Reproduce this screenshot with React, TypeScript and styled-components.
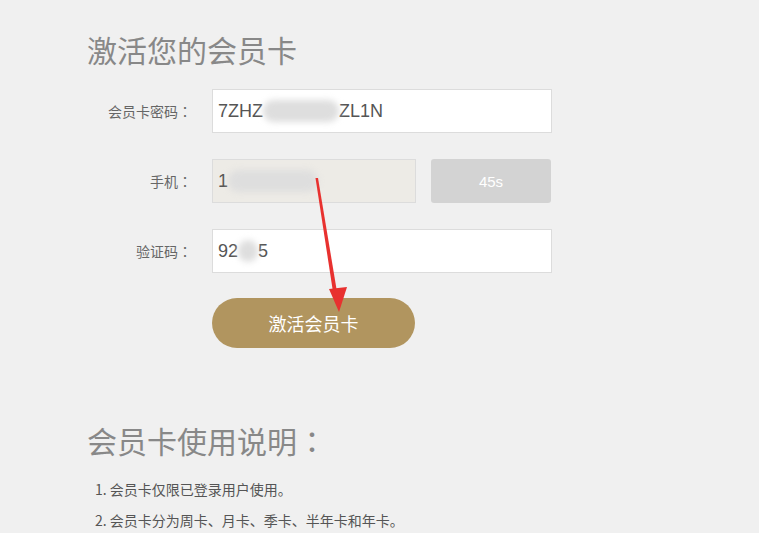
import React from 'react';
import styled, { createGlobalStyle } from 'styled-components';

const GlobalStyle = createGlobalStyle`
  html, body {
    margin: 0;
    padding: 0;
    background: #f0f0f0;
  }
  body {
    font-family: "Liberation Sans", Arial, "Noto Sans CJK SC", sans-serif;
  }
`;

const StyledPage = styled.div`
  position: relative;
  width: 759px;
  height: 533px;
  overflow: hidden;
  padding: 26px 0 0 87px;
  box-sizing: border-box;
  background: #f0f0f0;
`;

const Heading = styled.h2<{ $top?: number }>`
  margin: ${(p) => p.$top ?? 0}px 0 0;
  font-size: 30px;
  line-height: 46px;
  font-weight: normal;
  color: #888;
  font-family: "Noto Sans CJK SC", sans-serif;
`;

// centred full-width colon, as in the original page font
const Colon = styled.span`
  font-family: "Noto Sans CJK TC", sans-serif;
`;

const Form = styled.div`
  margin-top: 17px;
  display: grid;
  grid-template-columns: 105px 340px;
  column-gap: 20px;
  row-gap: 26px;
  align-items: center;
`;

const Label = styled.label`
  text-align: right;
  font-size: 14px;
  color: #666;
  font-family: "Noto Sans CJK SC", sans-serif;
`;

const Field = styled.div<{ $disabled?: boolean }>`
  height: 44px;
  box-sizing: border-box;
  border: 1px solid #dcdcdc;
  background: ${(p) => (p.$disabled ? '#edebe6' : '#fff')};
  padding-left: 5px;
  display: flex;
  align-items: center;
  font-size: 18px;
  color: #555;
  font-family: "Liberation Sans", Arial, sans-serif;
  white-space: nowrap;
  overflow: hidden;
`;

const Blur = styled.span<{ $w: number }>`
  display: inline-block;
  width: ${(p) => p.$w}px;
  height: 22px;
  border-radius: 11px;
  background: #dedede;
  filter: blur(3px);
`;

const PhoneRow = styled.div`
  display: grid;
  grid-template-columns: 204px 120px;
  column-gap: 15px;
`;

const CodeButton = styled.button`
  height: 44px;
  border: none;
  border-radius: 3px;
  background: #d3d3d3;
  color: #fff;
  font-size: 15px;
  font-family: "Liberation Sans", Arial, sans-serif;
`;

const SubmitButton = styled.button`
  grid-column: 2;
  margin-top: -1px;
  width: 203px;
  height: 50px;
  border: none;
  border-radius: 25px;
  background: #b1955f;
  color: #fff;
  font-size: 18px;
  font-family: "Noto Sans CJK SC", sans-serif;
`;

const Notes = styled.ol`
  list-style: none;
  margin: 11px 0 0;
  padding: 0 0 0 8px;
`;

const Note = styled.li`
  font-size: 14px;
  line-height: 31px;
  color: #555;
  font-family: "Noto Sans CJK SC", sans-serif;
`;

const Arrow = styled.svg`
  position: absolute;
  left: 0;
  top: 0;
  pointer-events: none;
`;

const App = () => (
  <StyledPage>
    <GlobalStyle />
    <Heading>激活您的会员卡</Heading>
    <Form>
      <Label>会员卡密码<Colon>：</Colon></Label>
      <Field>
        7ZHZ<Blur $w={76} />ZL1N
      </Field>
      <Label>手机<Colon>：</Colon></Label>
      <PhoneRow>
        <Field $disabled>
          1<Blur $w={90} />
        </Field>
        <CodeButton>45s</CodeButton>
      </PhoneRow>
      <Label>验证码<Colon>：</Colon></Label>
      <Field>
        92<Blur $w={20} />5
      </Field>
      <SubmitButton>激活会员卡</SubmitButton>
    </Form>
    <Heading $top={69}>会员卡使用说明<Colon>：</Colon></Heading>
    <Notes>
      <Note>1. 会员卡仅限已登录用户使用。</Note>
      <Note>2. 会员卡分为周卡、月卡、季卡、半年卡和年卡。</Note>
    </Notes>
    <Arrow width="759" height="533" viewBox="0 0 759 533">
      <path d="M315.5 178 L318 178 L337 292 L333 292 Z" fill="#e8312f" />
      <polygon points="329,289 347,287 339,312" fill="#e8312f" />
    </Arrow>
  </StyledPage>
);

export default App;
